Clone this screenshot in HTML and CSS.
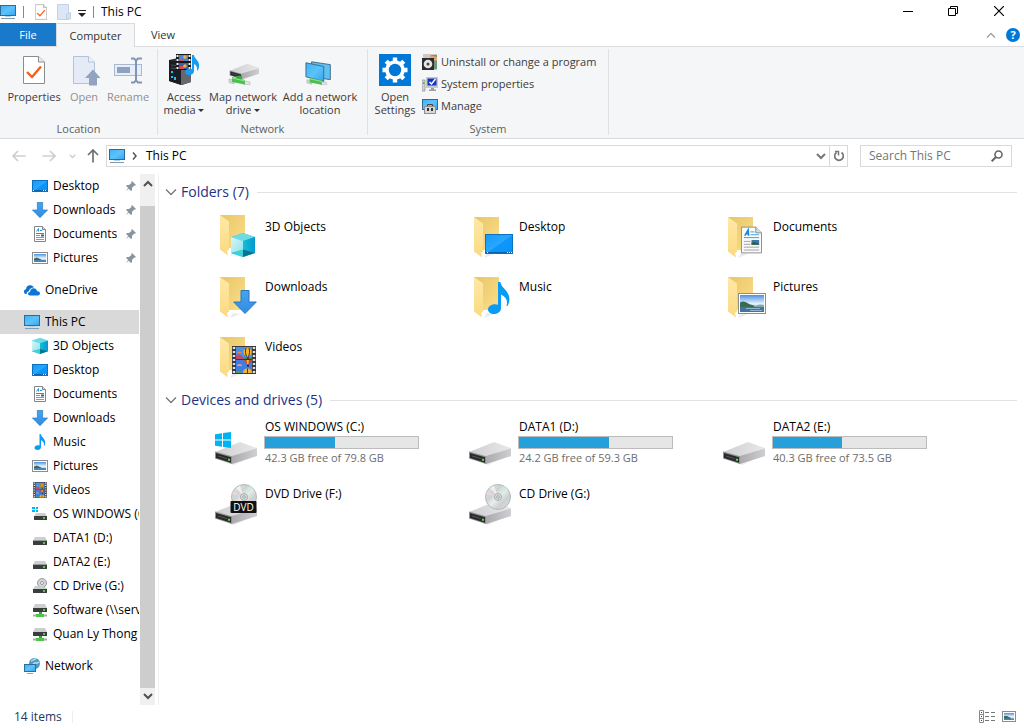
FILE: index.html
```html
<!DOCTYPE html>
<html lang="en">
<head>
<meta charset="utf-8">
<title>This PC</title>
<link rel="stylesheet" href="styles.css">
</head>
<body>
<svg class="sprite" aria-hidden="true">
  <defs>
    <linearGradient id="gScreen" x1="0" y1="0" x2="1" y2="1"><stop offset="0" stop-color="#3fb0f5"/><stop offset=".5" stop-color="#5cc3fb"/><stop offset="1" stop-color="#35a4ee"/></linearGradient>
    <linearGradient id="gDesk" x1="0" y1="0" x2="1" y2="1"><stop offset="0" stop-color="#1598fb"/><stop offset=".5" stop-color="#28a8ff"/><stop offset=".52" stop-color="#0e96fa"/><stop offset="1" stop-color="#0a92f8"/></linearGradient>
    <linearGradient id="gFold" x1="0" y1="0" x2="1" y2="1"><stop offset="0" stop-color="#e9c566"/><stop offset="1" stop-color="#fbdf8b"/></linearGradient>
    <linearGradient id="gFlap" x1="0" y1="0" x2="0" y2="1"><stop offset="0" stop-color="#ffe9a8"/><stop offset="1" stop-color="#fbd980"/></linearGradient>
    <linearGradient id="gTop" x1="0" y1="0" x2="1" y2="0"><stop offset="0" stop-color="#cfcfd2"/><stop offset="1" stop-color="#e8e8ea"/></linearGradient>
    <linearGradient id="gSide" x1="0" y1="0" x2="1" y2="0"><stop offset="0" stop-color="#a9a9ae"/><stop offset="1" stop-color="#cfcfd3"/></linearGradient>
    <linearGradient id="gSky" x1="0" y1="0" x2="0" y2="1"><stop offset="0" stop-color="#4c8fe6"/><stop offset=".5" stop-color="#e2f1fa"/><stop offset="1" stop-color="#9fc3dc"/></linearGradient>
    <linearGradient id="gCubeL" x1="0" y1="0" x2="1" y2="1"><stop offset="0" stop-color="#d9f6f6"/><stop offset="1" stop-color="#8fe3ea"/></linearGradient>
    <linearGradient id="gCubeR" x1="0" y1="0" x2="1" y2="0"><stop offset="0" stop-color="#14bfd6"/><stop offset="1" stop-color="#0596d2"/></linearGradient>
    <linearGradient id="gArrow" x1="0" y1="0" x2="0" y2="1"><stop offset="0" stop-color="#47a3ec"/><stop offset="1" stop-color="#2f8de4"/></linearGradient>
    <linearGradient id="gDisc" x1="0" y1="0" x2="1" y2="1"><stop offset="0" stop-color="#e2e4e4"/><stop offset=".35" stop-color="#cfd2d2"/><stop offset=".5" stop-color="#eceeee"/><stop offset=".7" stop-color="#cdd0d0"/><stop offset="1" stop-color="#dfe0e0"/></linearGradient>
  </defs>

  <symbol id="pc" viewBox="0 0 16 16"><rect x=".5" y="1.500" width="15" height="10" fill="url(#gScreen)" stroke="#2b6c9c"/><path d="M5 12.500h6" stroke="#b9cfdd"/><path d="M1 14.500h14" stroke="#7d9cb4"/></symbol>
  <symbol id="desktop" viewBox="0 0 28 20"><rect x=".5" y=".5" width="27" height="19" fill="url(#gDesk)" stroke="#0c72bd"/><path d="M1 18.500h26" stroke="#0a62aa"/><path d="M2 18.500h1M22 18.500h1M24 18.500h1M26 18.500h1" stroke="#fff"/></symbol>
  <symbol id="desktop16" viewBox="0 0 16 16"><rect x=".5" y="2.500" width="15" height="11" fill="url(#gDesk)" stroke="#0c72bd"/><path d="M1 12.500h14" stroke="#0a62aa"/><path d="M1 12.500h1M11 12.500h1M13 12.500h1" stroke="#fff"/></symbol>
  <symbol id="down" viewBox="0 0 24 24"><path d="M8 .5h8V12h7.300L12 23.500.700 12H8z" fill="url(#gArrow)" stroke="#2577c4"/></symbol>
  <symbol id="doc" viewBox="0 0 22 28"><path d="M.5.500h15l6 6v21H.5z" fill="#fafafa" stroke="#8b8b8b"/><path d="M15.500.500v6h6" fill="#dcdcdc" stroke="#8b8b8b"/><path d="M4 9.500L7.500 3.500 8 9.500M5.500 7.500h2.500" fill="none" stroke="#1586cf" stroke-width="1.600"/><path d="M10 5.500h4M10 8.500h9M3 11.500h16" stroke="#33a0e0"/><path d="M3 15.500h7M3 18.500h7M3 21.500h16M3 24.500h16" stroke="#a2a2a2"/><rect x="11" y="14" width="8" height="5" fill="#3c78a8"/><path d="M11 17l3-1 5 2v1h-8z" fill="#2f5f3f"/></symbol>
  <symbol id="doc16" viewBox="0 0 16 16"><path d="M2.500.500h8l3 3v12h-11z" fill="#fff" stroke="#858585"/><path d="M10.500.500v3h3" fill="#ddd" stroke="#858585"/><path d="M4.500 5.500L6.500 2.500v3M8 4.500h2M4 7.500h8" fill="none" stroke="#1f94dc"/><path d="M4 9.500h4M4 11.500h8M4 13.500h8" stroke="#969696"/><path d="M9 9.500h3" stroke="#2b6a86" stroke-width="2"/></symbol>
  <symbol id="pic" viewBox="0 0 28 21"><rect x=".5" y=".5" width="27" height="20" fill="#fff" stroke="#8d8d8d"/><rect x="2" y="2" width="24" height="17" fill="url(#gSky)"/><path d="M2 9.500c3-2 6-.5 9 1.500l8 2.500v1H2z" fill="#3a6b52"/><path d="M16 13l6-1.500 4 .5v2H16z" fill="#87a9a6"/><path d="M2 14h24v5H2z" fill="#3f74a3"/><path d="M8 15.500h14M12 17.500h12" stroke="#8fb4d0"/></symbol>
  <symbol id="pic16" viewBox="0 0 16 16"><rect x=".5" y="2.500" width="15" height="11" fill="#fff" stroke="#8d8d8d"/><rect x="2" y="4" width="12" height="8" fill="url(#gSky)"/><path d="M2 8.500l3-1 6 3H2z" fill="#3d6b45"/><path d="M2 10h12v2H2z" fill="#4b83b5"/></symbol>
  <symbol id="cube" viewBox="0 0 24 24"><path d="M12 0l12 4v16l-12 4L0 20V4z" fill="#2cc5d8"/><path d="M12 0l12 4-12 4L0 4z" fill="#6fdbe4"/><path d="M0 4l12 4v9L0 20z" fill="url(#gCubeL)"/><path d="M24 4L12 8v9l12 3z" fill="url(#gCubeR)"/><path d="M12 16.500L0 20l12 4z" fill="#3ccfdd"/><path d="M12 16.500L24 20l-12 4z" fill="#06748f"/></symbol>
  <symbol id="note" viewBox="0 0 22 32"><path d="M10 0h2.500c.5 4 3 5.500 5.500 8.500 4 5 4.500 10 1.500 15.500h-1c1.500-4.500 0-9-5.500-11.500v13.500c0 3.500-3 6-7 6-3.500 0-6-1.800-6-4.500 0-3.500 5-6.500 10-4.700z" fill="#0a9bf5"/></symbol>
  <symbol id="film" viewBox="0 0 24 28"><rect width="24" height="28" fill="#3a3a3a"/><path d="M2 1v26M22 1v26" stroke="#e2e2e2" stroke-width="2.400" stroke-dasharray="2 2"/><rect x="4" y="1" width="16" height="12" fill="#4a8fe8"/><rect x="4" y="14" width="16" height="13" fill="#3f7ee0"/><path d="M4 10l2-2 4 2 2 3H4z" fill="#c2486a"/><path d="M12 11.500h8V13h-8z" fill="#3c8a4c"/><path d="M5 7q2.500-2.500 5 0z" fill="#f08a4b"/><ellipse cx="15.500" cy="6" rx="4" ry="4.300" fill="#f0b52b"/><path d="M14 2c-1 3-.5 6 .5 8.500M17 2c1 3 .5 6-.5 8.500" stroke="#502020" fill="none"/><path d="M15 11h2v2h-2z" fill="#7c2e14"/><path d="M12 14h8l-3 4.500h-2z" fill="#d83a2b"/><path d="M14.500 14h2.500l-.5 4h-1.500z" fill="#f0b52b"/><path d="M15 19h2v1.500h-2z" fill="#222"/><path d="M5 19q2.500-2 5 0v1H5z" fill="#e79a90"/><path d="M11 27q0-4.500 4.500-4.500T20 27z" fill="#f0b52b"/><path d="M15.500 22.500V27" stroke="#7c2e14"/><path d="M4 25h6v2H4z" fill="#4f9a5c"/></symbol>
  <symbol id="folder" viewBox="0 0 48 48"><path d="M20 40l7 1-10 4z" fill="#ddd" opacity=".6"/><path d="M7 4h25v33H9z" fill="url(#gFold)"/><path d="M7 4l9 6.500v28L14 40l1 4.500-8-6z" fill="url(#gFlap)"/></symbol>
  <symbol id="drive" viewBox="0 0 44 24"><path d="M17 23l26-11v2L20 24z" fill="#ddd" opacity=".6"/><path d="M1 11L26 1l17 6v8L17 23z" fill="url(#gTop)"/><path d="M18 15L43 7.500V15L18 23z" fill="url(#gSide)"/><path d="M1 10.500l17 4.800V23L1 17.500z" fill="#8f9093"/><path d="M2 12l15 4.300v5.400L2 17z" fill="#28292b"/><path d="M4 15l9 2.700" stroke="#545659"/><path d="M14 18.500l2 .5" stroke="#4bea3c" stroke-width="2"/></symbol>
  <symbol id="disc" viewBox="0 0 26 26"><circle cx="13" cy="13" r="12.500" fill="url(#gDisc)" stroke="#b4b8b8"/><path d="M13 13L5 4 9 1.500z" fill="#fff" opacity=".6"/><path d="M13 13l6-11 3 3z" fill="#c7efd9" opacity=".8"/><path d="M13 13L1 10l1-3z" fill="#f0d3ea" opacity=".7"/><circle cx="13" cy="13" r="3.500" fill="#dcdede" stroke="#a9adad"/><circle cx="13" cy="13" r="1.300" fill="#fff" stroke="#9a9e9e"/></symbol>
  <symbol id="win" viewBox="0 0 16 16"><path d="M0 2.300L7 1.300v6.200H0zM8 1.100L16 0v7.500H8zM0 8.500h7v6.300l-7-1zM8 8.500h8V16l-8-1.100z" fill="#00b4f1"/></symbol>
  <symbol id="drive16" viewBox="0 0 16 16"><path d="M3 7h10l2 4H1z" fill="#cdced1"/><rect x="1" y="11" width="14" height="4" fill="#3b3c3e"/><path d="M1 10.500h14" stroke="#9b9c9f"/><path d="M11 13h2" stroke="#3fd438" stroke-width="2"/></symbol>
  <symbol id="osdrive16" viewBox="0 0 16 16"><path d="M4 7h9l2 4H2z" fill="#cdced1"/><rect x="2" y="10" width="13" height="4" fill="#3b3c3e"/><path d="M11 12h2" stroke="#3fd438" stroke-width="2"/><path d="M0 1h3v2H0zM4 1h2v2H4zM0 4h3v2H0zM4 4h2v2H4z" fill="#00b4f1"/></symbol>
  <symbol id="cd16" viewBox="0 0 16 16"><circle cx="10" cy="5" r="4.500" fill="#d4d6d6" stroke="#969999"/><circle cx="10" cy="5" r="1.500" fill="#fff" stroke="#969999"/><path d="M3 8h4l3 1h3l2 2H1z" fill="#cdced1"/><rect x="1" y="11" width="14" height="4" fill="#3b3c3e"/><path d="M11 13h2" stroke="#3fd438" stroke-width="2"/></symbol>
  <symbol id="netdrive16" viewBox="0 0 16 16"><path d="M3 2h10l2 4H1z" fill="#cdced1"/><rect x="1" y="6" width="14" height="4" fill="#3b3c3e"/><path d="M11 8h2" stroke="#3fd438" stroke-width="2"/><path d="M7 10h3v2H7z" fill="#3aa63a"/><rect x="4" y="12" width="8" height="3" fill="#4fc54c"/><path d="M1 13.500h3M12 13.500h3" stroke="#aaa" stroke-width="2"/></symbol>
  <symbol id="network" viewBox="0 0 16 16"><circle cx="10.500" cy="5.500" r="5.500" fill="#4a9cc6"/><path d="M7 3c2 0 3-2 5-2M9 6c2-2 4 0 6-2" stroke="#b9dfef" stroke-width="1.500" fill="none"/><rect x=".5" y="6.500" width="11" height="7" fill="url(#gScreen)" stroke="#2b6c9c"/><path d="M3 15.500h6" stroke="#8aa"/></symbol>
  <symbol id="onedrive" viewBox="0 0 16 16"><path d="M1.500 12C-.8 11-.3 7.500 2 7.300 2.300 4.500 4 3 6.500 3.200c1.700.1 2.800 1 3.300 2.200C7 5.500 5 7 5 9.300c-1.800.3-2.600 1.400-2.200 2.700z" fill="#0f6fca"/><path d="M6 13.500c-2.600-.3-2.600-3.300 0-3.500.2-2.500 1.600-3.800 3.600-3.800 1.900 0 3.100 1.200 3.500 3 3.600-.4 3.700 4 .9 4.300z" fill="#0a76d8"/></symbol>
  <symbol id="pin" viewBox="0 0 12 12"><path d="M7 1l4 4-1 .7-.8-.2-2.200 2.400.1 2L6 11 3.700 8.700.700 11.300 3.200 8 1 5.800 2 5l2 .1 2.500-2.200L6.300 2z" fill="#8795a1"/></symbol>
  <symbol id="check" viewBox="0 0 22 28"><path d="M.5.500h15l6 5.500v21.500H.5z" fill="#fff" stroke="#8c8c8c"/><path d="M15.500.500V6h6" fill="#ececec" stroke="#8c8c8c"/><path d="M4 16l5 5L18 10.500" fill="none" stroke="#f1611b" stroke-width="2.400"/></symbol>
  <symbol id="openfile" viewBox="0 0 28 30"><path d="M.5.500h15l6 5.500v21.500H.5z" fill="#e4ebf6" stroke="#b4c2d8"/><path d="M15.500.500V6h6" fill="#eef3fa" stroke="#b4c2d8"/><path d="M20 13.500l7.500 8.500H24v7.500h-8V22h-4z" fill="#91a3c1"/></symbol>
  <symbol id="rename" viewBox="0 0 28 28"><rect x=".5" y="8.500" width="27" height="11" fill="#e7eef8" stroke="#a9b9d2"/><rect x="3" y="11" width="13" height="6" fill="#8ea1c0"/><path d="M17 2.500h3l2 2 2-2h4M22 4v20M17 26.500h3l2-2 2 2h4" fill="none" stroke="#8194b4" stroke-width="2"/></symbol>
  <symbol id="media" viewBox="0 0 32 32"><path d="M1 6l9-2 13 2v22l-9 3L1 27z" fill="#33363a"/><path d="M1 6l12 2v23L1 27z" fill="#1c1d20"/><path d="M13 12l10-2v18l-10 3z" fill="#64686d"/><path d="M3 11l8 1M3 14l8 1" stroke="#4b5158"/><path d="M4 17v2M4 22v2M7 23v3" stroke="#19c3ff" stroke-width="2"/><rect x="8" y="0" width="15" height="16" fill="#17191f"/><path d="M9.500 1v14M21.500 1v14" stroke="#eee" stroke-width="2" stroke-dasharray="2 2"/><rect x="11" y="1" width="9" height="6" fill="#4b83db"/><rect x="11" y="9" width="9" height="6" fill="#355fb0"/><path d="M11 5h4v2h-4zM12 12h4v3h-4z" fill="#d84f5c"/><circle cx="17" cy="3" r="1.800" fill="#f2b62d"/><circle cx="17" cy="12" r="1.800" fill="#f2b62d"/><path d="M24 1h2c0 4 6 5 5 12-.3 2-1 3-2 4 .5-4-.500-6-3-7v7c0 3-3 4-5.500 4S17 19.500 17 18c0-3 4-4 7-3z" fill="#159cf5"/></symbol>
  <symbol id="cable" viewBox="0 0 24 8"><path d="M2 2l5 1v4L2 5.500z" fill="#cfd4cf" stroke="#aaa" stroke-width=".5"/><path d="M16 4l7 1v3l-7-1z" fill="#e3e5e3" stroke="#aaa" stroke-width=".5"/><path d="M5 0l13 3v4.500L5 5z" fill="#4cbf52"/><path d="M5 1l13 3" stroke="#95e295"/></symbol>
  <symbol id="mapdrive" viewBox="0 0 32 28"><use href="#drive" x="2" y="3" width="31" height="17"/><path d="M9 16v3h6v-3z" fill="#3ba642"/><use href="#cable" x="0" y="17" width="24" height="8"/></symbol>
  <symbol id="addnet" viewBox="0 0 32 32"><path d="M7 3l20 3v16L7 19z" fill="#5fc0f3" stroke="#3c6a88"/><path d="M1 4l19 4v16L1 19z" fill="url(#gScreen)" stroke="#3c6a88"/><use href="#cable" x="0" y="20" width="24" height="8"/></symbol>
  <symbol id="gear" viewBox="0 0 32 32"><rect width="32" height="32" fill="#0078d7"/><circle cx="16" cy="16" r="8" fill="none" stroke="#fff" stroke-width="3.600"/><g stroke="#fff" stroke-width="4.400"><path d="M16 3.500V8M16 24v4.500M3.500 16H8M24 16h4.500M7.200 7.200l3.100 3.100M21.700 21.700l3.100 3.100M7.200 24.800l3.100-3.100M21.700 10.300l3.100-3.100"/></g></symbol>
  <symbol id="uninstall" viewBox="0 0 16 16"><path d="M1 0h14v16H1z" fill="#c8cac8"/><path d="M9 1h6v14H9z" fill="#6f9a7a"/><path d="M8 1l7 2v4L8 5z" fill="#e9a06e"/><rect x="0" y="4" width="12" height="12" fill="#2d2d2d"/><circle cx="6" cy="10" r="4.300" fill="#e6e6e6"/><circle cx="6" cy="10" r="1.500" fill="#444"/></symbol>
  <symbol id="sysprop" viewBox="0 0 16 16"><path d="M0 4h3v11H0z" fill="#d2d4d2" stroke="#8a8a8a" stroke-width=".7"/><path d="M1 7h1.500" stroke="#3ecb30" stroke-width="2"/><path d="M4 1h12v11H4z" fill="#c6c9c9"/><path d="M5.500 2.500h9v7h-9z" fill="#1735c4"/><path d="M7.500 6l2 2 4-5" fill="none" stroke="#fff" stroke-width="1.500"/><path d="M9 12h3v1.500h2V15H7v-1.500h2z" fill="#9c9f9f"/></symbol>
  <symbol id="manage" viewBox="0 0 16 16"><rect x=".5" y="1.500" width="15" height="10" fill="url(#gScreen)" stroke="#2b6c9c"/><path d="M5.500 8V6.500h5V8" fill="none" stroke="#444"/><rect x="2.500" y="8.500" width="11" height="7" fill="#d8d8d8" stroke="#909090"/><path d="M5 10h2v3H5zM9 10h2v3H9z" fill="#333"/></symbol>
  <symbol id="chevdown" viewBox="0 0 12 8"><path d="M1 1.500l5 5 5-5" fill="none" stroke="currentColor" stroke-width="1.300"/></symbol>
  <symbol id="chevbold" viewBox="0 0 10 7"><path d="M1 1l4 4 4-4" fill="none" stroke="currentColor" stroke-width="2"/></symbol>
  <symbol id="arrow" viewBox="0 0 14 12"><path d="M1 6h12.500M6 1L1 6l5 5" fill="none" stroke="currentColor" stroke-width="1.700"/></symbol>
</svg>

<div class="window">
  <header class="titlebar">
    <svg class="i16"><use href="#pc"/></svg>
    <span class="tsep tsep-first"></span>
    <button class="plain" aria-label="Properties"><svg class="qdoc"><use href="#check"/></svg></button>
    <button class="plain" aria-label="New folder"><svg class="qfolder" viewBox="0 0 14 16"><path d="M.5.500h11v15H.5z" fill="#dbe6f6" stroke="#c3d0e6"/><path d="M9.500 10l4-1.500v6.500h-4z" fill="#d3dff0" stroke="#c3d0e6"/></svg></button>
    <button class="plain qmore" aria-label="Customize toolbar"><svg width="8" height="7" viewBox="0 0 8 7"><path d="M0 .5h8" stroke="#222"/><path d="M0 3h8L4 7z" fill="#222"/></svg></button>
    <span class="tsep"></span>
    <h1 class="title">This PC</h1>
    <div class="wincontrols">
      <button class="plain" aria-label="Minimize"><svg width="10" height="10" viewBox="0 0 10 10"><path d="M0 5.500h10" stroke="#000"/></svg></button>
      <button class="plain" aria-label="Restore"><svg width="10" height="10" viewBox="0 0 10 10"><path d="M.5 2.500h7v7h-7zM2.500 2.500v-2h7v7h-2" fill="none" stroke="#000"/></svg></button>
      <button class="plain" aria-label="Close"><svg width="10" height="10" viewBox="0 0 10 10"><path d="M0 0l10 10M10 0L0 10" stroke="#000" stroke-width="1.200"/></svg></button>
    </div>
  </header>

  <nav class="tabs">
    <button class="tab tab-file">File</button>
    <button class="tab tab-active">Computer</button>
    <button class="tab">View</button>
    <div class="tabtools">
      <button class="plain" aria-label="Collapse ribbon"><svg width="10" height="6" viewBox="0 0 10 6"><path d="M1 5.500l4-4 4 4" fill="none" stroke="#a0a0a0" stroke-width="1.300"/></svg></button>
      <button class="help" aria-label="Help">?</button>
    </div>
  </nav>

  <section class="ribbon">
    <div class="group group-location">
      <div class="tools">
        <button class="tool"><span class="pict"><svg width="22" height="28"><use href="#check"/></svg></span>Properties</button>
        <button class="tool" disabled><span class="pict pict-open"><svg width="28" height="30"><use href="#openfile"/></svg></span>Open</button>
        <button class="tool" disabled><span class="pict"><svg width="28" height="28"><use href="#rename"/></svg></span>Rename</button>
      </div>
      <h2 class="gname">Location</h2>
    </div>
    <div class="group group-network">
      <div class="tools">
        <button class="tool tool-narrow"><span class="pict"><svg width="32" height="32"><use href="#media"/></svg></span>Access<br>media <i class="caret"></i></button>
        <button class="tool tool-wide"><span class="pict pict-low"><svg width="32" height="28"><use href="#mapdrive"/></svg></span>Map network<br>drive <i class="caret"></i></button>
        <button class="tool tool-wider"><span class="pict pict-low"><svg width="30" height="30"><use href="#addnet"/></svg></span>Add a network<br>location</button>
      </div>
      <h2 class="gname">Network</h2>
    </div>
    <div class="group group-system">
      <div class="tools">
        <button class="tool tool-narrow"><span class="pict"><svg width="32" height="32"><use href="#gear"/></svg></span>Open<br>Settings</button>
        <div class="smalls">
          <button class="small"><svg class="i16"><use href="#uninstall"/></svg>Uninstall or change a program</button>
          <button class="small"><svg class="i16"><use href="#sysprop"/></svg>System properties</button>
          <button class="small"><svg class="i16"><use href="#manage"/></svg>Manage</button>
        </div>
      </div>
      <h2 class="gname">System</h2>
    </div>
  </section>

  <div class="addressrow">
    <div class="navbuttons">
      <button class="plain nav-off" aria-label="Back"><svg width="14" height="12"><use href="#arrow"/></svg></button>
      <button class="plain nav-off" aria-label="Forward"><svg class="flip" width="14" height="12"><use href="#arrow"/></svg></button>
      <button class="plain nav-off nav-recent" aria-label="Recent locations"><svg width="7" height="5"><use href="#chevbold"/></svg></button>
      <button class="plain nav-up" aria-label="Up"><svg class="turn" width="14" height="12"><use href="#arrow"/></svg></button>
    </div>
    <div class="address">
      <svg class="i16"><use href="#pc"/></svg>
      <svg class="crumbsep" width="5" height="8" viewBox="0 0 5 8"><path d="M1 .5L4 4 1 7.500" fill="none" stroke="#555" stroke-width="1.500"/></svg>
      <a class="crumb" href="#this-pc">This PC</a>
      <button class="plain addrbtn" aria-label="Previous locations"><svg width="10" height="7"><use href="#chevbold"/></svg></button>
      <button class="plain addrbtn refresh" aria-label="Refresh"><svg width="12" height="12" viewBox="0 0 12 12"><path d="M8.500 2.500a4.300 4.300 0 1 1-5 0" fill="none" stroke="#777" stroke-width="1.700"/><path d="M2 1.500h4M5.500 1v4.500" stroke="#777" stroke-width="1.500"/></svg></button>
    </div>
    <label class="search">
      <input type="search" placeholder="Search This PC" aria-label="Search This PC">
      <svg width="12" height="12" viewBox="0 0 12 12"><circle cx="7.500" cy="4.500" r="3.500" fill="none" stroke="#666" stroke-width="1.600"/><path d="M5 7L.7 11.300" stroke="#666" stroke-width="2"/></svg>
    </label>
  </div>

  <div class="main">
    <aside class="sidebar">
      <nav class="tree">
        <a class="node sub" href="#d"><svg class="i16"><use href="#desktop16"/></svg><span>Desktop</span><svg class="pin"><use href="#pin"/></svg></a>
        <a class="node sub" href="#d"><svg class="i16"><use href="#down"/></svg><span>Downloads</span><svg class="pin"><use href="#pin"/></svg></a>
        <a class="node sub" href="#d"><svg class="i16"><use href="#doc16"/></svg><span>Documents</span><svg class="pin"><use href="#pin"/></svg></a>
        <a class="node sub" href="#d"><svg class="i16"><use href="#pic16"/></svg><span>Pictures</span><svg class="pin"><use href="#pin"/></svg></a>
        <a class="node root" href="#d"><svg class="i16"><use href="#onedrive"/></svg><span>OneDrive</span></a>
        <a class="node root selected" href="#this-pc"><svg class="i16"><use href="#pc"/></svg><span>This PC</span></a>
        <a class="node sub" href="#d"><svg class="i16"><use href="#cube"/></svg><span>3D Objects</span></a>
        <a class="node sub" href="#d"><svg class="i16"><use href="#desktop16"/></svg><span>Desktop</span></a>
        <a class="node sub" href="#d"><svg class="i16"><use href="#doc16"/></svg><span>Documents</span></a>
        <a class="node sub" href="#d"><svg class="i16"><use href="#down"/></svg><span>Downloads</span></a>
        <a class="node sub" href="#d"><svg class="i16"><use href="#note"/></svg><span>Music</span></a>
        <a class="node sub" href="#d"><svg class="i16"><use href="#pic16"/></svg><span>Pictures</span></a>
        <a class="node sub" href="#d"><svg class="i16"><use href="#film"/></svg><span>Videos</span></a>
        <a class="node sub" href="#d"><svg class="i16"><use href="#osdrive16"/></svg><span>OS WINDOWS (C:)</span></a>
        <a class="node sub" href="#d"><svg class="i16"><use href="#drive16"/></svg><span>DATA1 (D:)</span></a>
        <a class="node sub" href="#d"><svg class="i16"><use href="#drive16"/></svg><span>DATA2 (E:)</span></a>
        <a class="node sub" href="#d"><svg class="i16"><use href="#cd16"/></svg><span>CD Drive (G:)</span></a>
        <a class="node sub" href="#d"><svg class="i16"><use href="#netdrive16"/></svg><span>Software (\\server)</span></a>
        <a class="node sub" href="#d"><svg class="i16"><use href="#netdrive16"/></svg><span>Quan Ly Thong Tin</span></a>
        <a class="node root" href="#d"><svg class="i16"><use href="#network"/></svg><span>Network</span></a>
      </nav>
      <div class="scrollbar">
        <button class="plain sup" aria-label="Scroll up"><svg class="over" width="10" height="7"><use href="#chevbold"/></svg></button>
        <div class="thumb"></div>
        <button class="plain sdown" aria-label="Scroll down"><svg width="10" height="7"><use href="#chevbold"/></svg></button>
      </div>
    </aside>

    <main class="content" id="this-pc">
      <h2 class="section"><svg width="12" height="8"><use href="#chevdown"/></svg><span>Folders (7)</span></h2>
      <div class="grid folders">
        <a class="tile" href="#f"><svg class="big" viewBox="0 0 48 48"><use href="#folder" y="-2" width="48" height="48"/><use href="#cube" x="18" y="20" width="24" height="24"/></svg><span>3D Objects</span></a>
        <a class="tile" href="#f"><svg class="big" viewBox="0 0 48 48"><use href="#folder"/><use href="#desktop" x="18" y="21" width="28" height="20"/></svg><span>Desktop</span></a>
        <a class="tile" href="#f"><svg class="big" viewBox="0 0 48 48"><use href="#folder"/><use href="#doc" x="20" y="13" width="21" height="28"/></svg><span>Documents</span></a>
        <a class="tile" href="#f"><svg class="big" viewBox="0 0 48 48"><use href="#folder"/><use href="#down" x="20" y="17" width="24" height="24"/></svg><span>Downloads</span></a>
        <a class="tile" href="#f"><svg class="big" viewBox="0 0 48 48"><use href="#folder"/><use href="#note" x="21" y="9" width="22" height="32"/></svg><span>Music</span></a>
        <a class="tile" href="#f"><svg class="big" viewBox="0 0 48 48"><use href="#folder"/><use href="#pic" x="17" y="20" width="28" height="21"/></svg><span>Pictures</span></a>
        <a class="tile" href="#f"><svg class="big" viewBox="0 0 48 48"><use href="#folder"/><use href="#film" x="19" y="13" width="24" height="28"/></svg><span>Videos</span></a>
      </div>
      <h2 class="section"><svg width="12" height="8"><use href="#chevdown"/></svg><span>Devices and drives (5)</span></h2>
      <div class="grid drives">
        <a class="tile" href="#f"><svg class="big" viewBox="0 0 48 48"><use href="#drive" x="1" y="22" width="44" height="24"/><use href="#win" x="2" y="13" width="16" height="16"/></svg><span class="info"><span>OS WINDOWS (C:)</span><span class="bar"><span class="fill" style="width:46%"></span></span><span class="free">42.3 GB free of 79.8 GB</span></span></a>
        <a class="tile" href="#f"><svg class="big" viewBox="0 0 48 48"><use href="#drive" x="1" y="22" width="44" height="24"/></svg><span class="info"><span>DATA1 (D:)</span><span class="bar"><span class="fill" style="width:59%"></span></span><span class="free">24.2 GB free of 59.3 GB</span></span></a>
        <a class="tile" href="#f"><svg class="big" viewBox="0 0 48 48"><use href="#drive" x="1" y="22" width="44" height="24"/></svg><span class="info"><span>DATA2 (E:)</span><span class="bar"><span class="fill" style="width:45%"></span></span><span class="free">40.3 GB free of 73.5 GB</span></span></a>
        <a class="tile" href="#f"><svg class="big" viewBox="0 0 48 48"><use href="#drive" x="1" y="15" width="44" height="24"/><use href="#disc" x="18" y="-2" width="26" height="26"/><rect x="17.500" y="15" width="26" height="12" rx="1" fill="#111"/><text x="30.500" y="25" class="dvd">DVD</text></svg><span class="info"><span>DVD Drive (F:)</span></span></a>
        <a class="tile" href="#f"><svg class="big" viewBox="0 0 48 48"><use href="#drive" x="1" y="15" width="44" height="24"/><use href="#disc" x="18" y="-2" width="26" height="26"/></svg><span class="info"><span>CD Drive (G:)</span></span></a>
      </div>
    </main>
  </div>

  <footer class="status">
    <span class="count">14 items</span>
    <div class="views">
      <button class="plain" aria-label="Details view"><svg width="17" height="13" viewBox="0 0 17 13"><path d="M.5.500h4v12h-4zM.5 4.500h4M.5 8.500h4" fill="none" stroke="#8a8a8a"/><path d="M2 2.500h1M2 6.500h1M2 10.500h1" stroke="#536"/><path d="M6 2.500h4M12 2.500h4M6 6.500h4M12 6.500h4M6 10.500h4M12 10.500h4" stroke="#777"/></svg></button>
      <button class="plain" aria-label="Large icons view"><svg width="14" height="11" viewBox="0 0 14 11"><rect x=".5" y=".5" width="13" height="10" fill="#fff" stroke="#8d8d8d"/><rect x="2" y="2" width="10" height="7" fill="url(#gSky)"/><path d="M2 5l3 0 4 2v2H2z" fill="#3d6b55"/><path d="M2 7.500h10V9H2z" fill="#4b83b5"/></svg></button>
    </div>
  </footer>
</div>
</body>
</html>
```
FILE: styles.css
```css
* { box-sizing: border-box; }
html, body { height: 100%; margin: 0; }
body, button, input { font: 12px/16px "Open Sans", "Noto Sans", sans-serif; color: #000; }
h1, h2 { margin: 0; font: inherit; }
a { color: inherit; text-decoration: none; }
svg { display: block; flex: none; }
button { border: 0; background: none; padding: 0; }
.sprite { position: absolute; width: 0; height: 0; }
.plain { display: flex; align-items: center; justify-content: center; color: inherit; }
.i16 { width: 16px; height: 16px; }

.window { min-height: 100vh; display: flex; flex-direction: column; background: #fff; overflow: hidden; }

.titlebar { display: flex; align-items: center; height: 23px; }
.tsep { width: 1px; height: 12px; background: #888; }
.tsep-first { margin: 0 11px 0 7px; }
.qdoc { width: 12px; height: 16px; }
.qfolder { width: 14px; height: 16px; margin-left: 10px; }
.qmore { margin: 3px 7px 0 7px; }
.title { margin-left: 7px; }
.wincontrols { margin-left: auto; display: flex; height: 21px; padding-right: 2px; align-self: flex-start; }
.wincontrols .plain { width: 45px; }
.wincontrols .plain:last-child { width: 47px; }

.tabs { display: flex; height: 24px; border-bottom: 1px solid #dadbdc; }
.tab { padding: 0 16px; height: 23px; font-size: 11px; color: #333; }
.tab-file { background: #1979ca; color: #fff; width: 56px; }
.tab-active { height: 24px; width: 79px; background: #f5f6f7; border: 1px solid #dadbdc; border-bottom: 0; padding: 0; }
.tabtools { margin-left: auto; display: flex; align-items: center; gap: 10px; padding-right: 4px; }
.help { width: 14px; height: 14px; border-radius: 50%; background: #0078d7; color: #fff; font-size: 11px; line-height: 14px; font-weight: 700; }

.ribbon { display: flex; height: 92px; background: #f5f6f7; border-bottom: 1px solid #dadbdc; }
.group { display: flex; flex-direction: column; justify-content: space-between; margin: 2px 0 3px; border-right: 1px solid #e0e1e2; }
.group-location { width: 158px; }
.group-network { width: 210px; }
.group-system { width: 241px; }
.tools { display: flex; align-items: flex-start; }
.group-location .tools { padding-left: 6px; }
.group-network .tools { padding-left: 3px; }
.group-system .tools { padding-left: 4px; }
.tool { width: 44px; font-size: 11px; line-height: 13px; white-space: nowrap; color: #3b3b3b; }
.group-location .tool:first-child { width: 56px; }
.tool:disabled { color: #8f8f8f; }
.pict { display: flex; align-items: center; justify-content: center; height: 37px; margin-bottom: 4px; padding-top: 5px; }
.pict-low { padding-top: 12px; }
.pict-open { padding: 7px 0 0 5px; }
.tool-narrow { width: 46px; }
.tool-wide { width: 72px; }
.tool-wider { width: 82px; }
.caret { display: inline-block; border: 3px solid transparent; border-top-color: #333; border-bottom: 0; vertical-align: 2px; }
.gname { text-align: center; color: #5e5e5e; font-size: 11px; line-height: 12px; }
.smalls { padding: 2px 0 0 4px; }
.small { display: flex; align-items: center; gap: 3px; height: 22px; font-size: 11px; color: #3b3b3b; white-space: nowrap; }

.addressrow { display: flex; align-items: center; height: 35px; padding: 0 12px 1px 0; }
.navbuttons { display: flex; align-items: center; width: 106px; padding-left: 12px; color: #707070; }
.nav-off { color: #cfcfcf; width: 14px; margin-right: 16px; }
.nav-recent { width: 7px; margin: 0 10px 0 -3px; }
.flip { transform: scaleX(-1); }
.turn { transform: rotate(90deg); }
.address { flex: 1; display: flex; align-items: center; height: 22px; border: 1px solid #d9d9d9; padding-left: 2px; }
.crumbsep { margin: 0 9px 0 7px; }
.crumb { flex: 1; }
.addrbtn { width: 16px; height: 20px; color: #777; }
.refresh { border-left: 1px solid #d9d9d9; width: 18px; }
.search { display: flex; align-items: center; width: 152px; height: 22px; margin-left: 12px; border: 1px solid #d9d9d9; padding: 0 8px; }
.search input { flex: 1; min-width: 0; border: 0; padding: 0; background: none; outline: 0; appearance: none; }
.search input::placeholder { color: #757575; opacity: 1; }

.main { flex: 1; display: flex; }
.sidebar { display: flex; width: 159px; border-right: 1px solid #f0f0f0; padding-right: 3px; }
.tree { flex: 1; min-width: 0; padding-right: 1px; }
.node { display: flex; align-items: center; gap: 5px; height: 24px; overflow: hidden; white-space: nowrap; }
.node span { min-width: 0; overflow: hidden; }
.sub { padding-left: 32px; }
.root { padding-left: 24px; margin-top: 8px; }
.selected { background: #d9d9d9; }
.pin { width: 12px; height: 12px; margin: 0 2px 0 auto; }
.scrollbar { width: 15px; display: flex; flex-direction: column; background: #f0f0f0; color: #505050; }
.sup { height: 32px; padding-bottom: 14px; }
.over { transform: rotate(180deg); }
.thumb { flex: 1; background: #cdcdcd; }
.sdown { height: 17px; }

.content { flex: 1; min-width: 0; padding: 9px 7px 0 6px; }
.section { display: flex; align-items: center; gap: 4px; font-size: 14px; line-height: 18px; color: #1e3287; white-space: nowrap; }
.section svg { color: #777; }
.section::after { content: ""; flex: 1; height: 1px; margin-left: 4px; background: #e2e2e2; }
.grid { display: grid; grid-template-columns: repeat(auto-fill, 254px); padding-left: 48px; margin-right: -7px; }
.folders { grid-auto-rows: 60px; padding-top: 10px; }
.drives { grid-auto-rows: 67px; padding-top: 10px; }
.tile { display: flex; gap: 4px; }
.big { width: 48px; height: 48px; overflow: visible; }
.folders .big { margin-top: 2px; }
.folders .tile span { padding-top: 8px; }
.info { display: flex; flex-direction: column; width: 155px; white-space: nowrap; }
.drives .tile { gap: 3px; }
.info > span:first-child { padding-left: 1px; }
.bar { height: 13px; margin: 1px 0; border: 1px solid #bcbcbc; background: #e6e6e6; }
.fill { display: block; height: 100%; background: #26a0da; }
.free { color: #6d6d6d; padding-left: 1px; font-size: 11px; }
.dvd { font: 10px "Open Sans", sans-serif; fill: #fff; text-anchor: middle; }

.status { display: flex; align-items: center; height: 23px; padding: 0 8px 0 14px; color: #1e395b; }
.count { padding-right: 10px; border-right: 1px solid #eee; line-height: 12px; }
.views { display: flex; align-items: center; gap: 6px; margin-left: auto; }
```
